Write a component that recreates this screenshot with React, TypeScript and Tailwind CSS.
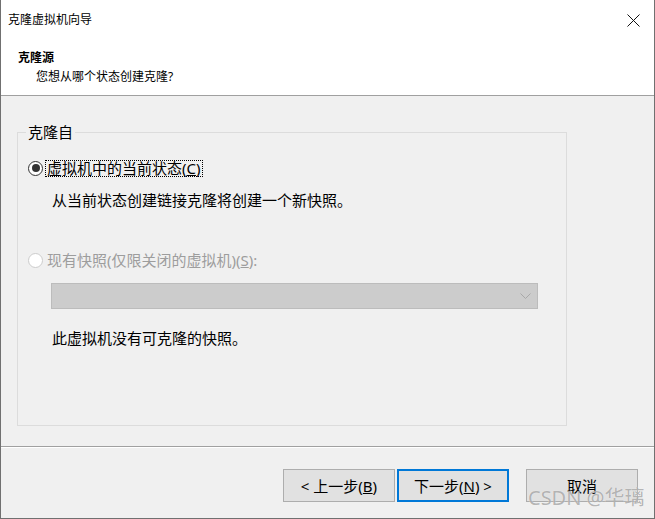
const font = { fontFamily: '"Noto Sans", "Noto Sans CJK SC", sans-serif' };

function Radio({ checked, disabled }: { checked?: boolean; disabled?: boolean }) {
  return (
    <span
      className={`w-[15px] h-[15px] rounded-full border flex items-center justify-center shrink-0 bg-white ${
        disabled ? 'border-[#cccccc]' : 'border-[#333333]'
      }`}
    >
      {checked && <span className="w-[8px] h-[8px] rounded-full bg-[#333333]" />}
    </span>
  );
}

function Button({ children, focused = false }: { children: React.ReactNode; focused?: boolean }) {
  return (
    <button
      className={`w-[112px] h-[33px] bg-[#e1e1e1] text-[15px] leading-[20px] text-black flex items-center justify-center ${
        focused ? 'border-2 border-[#0078d7]' : 'border border-[#adadad]'
      }`}
    >
      {children}
    </button>
  );
}

export default function App() {
  return (
    <div
      className="w-[655px] h-[519px] bg-[#f0f0f0] border-x border-b border-[#707070] relative overflow-hidden text-black"
      style={font}
    >
      {/* header */}
      <div className="bg-white h-[96px] border-b border-[#a0a0a0]">
        <div className="h-[40px] flex items-center justify-between pl-[7px] pr-[14px]">
          <span className="text-[12px] leading-[16px]">克隆虚拟机向导</span>
          <svg width="13" height="13" viewBox="0 0 13 13">
            <path d="M0.5 0.5 L12.5 12.5 M12.5 0.5 L0.5 12.5" stroke="#111" strokeWidth="1" fill="none" />
          </svg>
        </div>
        <div className="pl-[17px] mt-[9px] text-[12px] leading-[18px] font-bold">克隆源</div>
        <div className="pl-[35px] mt-[1px] text-[12px] leading-[18px]">您想从哪个状态创建克隆?</div>
      </div>

      {/* body */}
      <div className="h-[350px] pt-[36px] pl-[16px]">
        <div className="relative w-[550px] h-[294px] border border-[#dcdcdc]">
          <span className="absolute -top-[11px] left-[8px] bg-[#f0f0f0] px-[2px] text-[15px] leading-[20px]">
            克隆自
          </span>
          <div className="pt-[25px] pl-[10px] text-[15px] leading-[20px]">
            <div className="h-[20px] flex items-center">
              <Radio checked />
              <span className="ml-[3px] px-[1px] leading-[15px] outline-1 outline-dotted outline-black">
                虚拟机中的当前状态(<span className="underline">C</span>)
              </span>
            </div>
            <div className="mt-[12px] ml-[24px]">从当前状态创建链接克隆将创建一个新快照。</div>
            <div className="mt-[40px] h-[20px] flex items-center text-[#9d9d9d]">
              <Radio disabled />
              <span className="ml-[4px]">
                现有快照(仅限关闭的虚拟机)(<span className="underline">S</span>):
              </span>
            </div>
            <div className="mt-[13px] ml-[23px] w-[487px] h-[26px] bg-[#cccccc] border border-[#bcbcbc] flex items-center justify-end pr-[6px]">
              <svg width="11" height="7" viewBox="0 0 11 7">
                <path d="M0.5 0.5 L5.5 5.5 L10.5 0.5" stroke="#a8a8a8" strokeWidth="1" fill="none" />
              </svg>
            </div>
            <div className="mt-[19px] ml-[24px]">此虚拟机没有可克隆的快照。</div>
          </div>
        </div>
      </div>

      {/* footer */}
      <div className="border-t border-[#a0a0a0]">
        <div className="h-[1px] bg-white" />
        <div className="pt-[21px] pr-[16px] flex justify-end">
          <div className="flex gap-[2px]">
            <Button>
              &lt; 上一步(<span className="underline">B</span>)
            </Button>
            <Button focused>
              下一步(<span className="underline">N</span>) &gt;
            </Button>
          </div>
          <div className="ml-[17px]">
            <Button>取消</Button>
          </div>
        </div>
      </div>

      {/* watermark */}
      <span
        className="absolute left-[527px] top-[485px] text-[20px] leading-[26px] text-[rgba(140,140,140,0.65)]"
        style={{ textShadow: '0 0 1px rgba(255,255,255,0.8)' }}
      >
        CSDN @华璃
      </span>
    </div>
  );
}
